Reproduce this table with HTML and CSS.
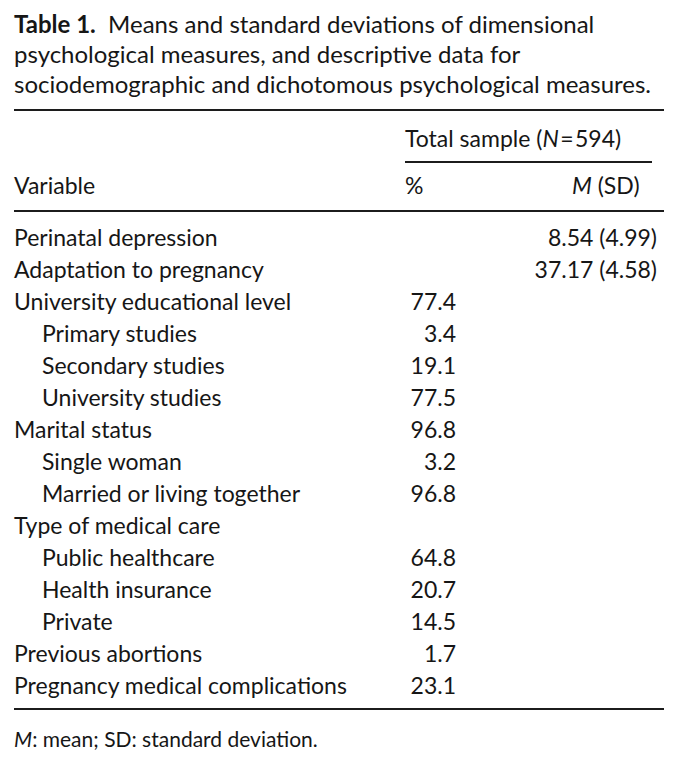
FILE: index.html
```html
<!DOCTYPE html>
<html>
<head>
<meta charset="utf-8">
<link rel="stylesheet" href="styles.css">
</head>
<body>
<div class="page">
  <p class="caption"><span class="label">Table 1.</span>&nbsp; Means and standard deviations of dimensional<br>psychological measures, and descriptive data for<br>sociodemographic and dichotomous psychological measures.</p>
  <table class="data">
    <colgroup>
      <col class="c-var">
      <col class="c-pct">
      <col class="c-msd">
    </colgroup>
    <thead>
      <tr class="group">
        <th class="var"></th>
        <th class="span" colspan="2"><span class="spanline">Total sample (<i>N</i>&#8202;=&#8202;594)</span></th>
      </tr>
      <tr class="heads">
        <th class="var">Variable</th>
        <th class="pct">%</th>
        <th class="msd"><i>M</i> (SD)</th>
      </tr>
    </thead>
    <tbody>
      <tr><td class="var">Perinatal depression</td><td class="pct"></td><td class="msd">8.54 (4.99)</td></tr>
      <tr><td class="var">Adaptation to pregnancy</td><td class="pct"></td><td class="msd">37.17 (4.58)</td></tr>
      <tr><td class="var">University educational level</td><td class="pct">77.4</td><td class="msd"></td></tr>
      <tr><td class="var sub">Primary studies</td><td class="pct">3.4</td><td class="msd"></td></tr>
      <tr><td class="var sub">Secondary studies</td><td class="pct">19.1</td><td class="msd"></td></tr>
      <tr><td class="var sub">University studies</td><td class="pct">77.5</td><td class="msd"></td></tr>
      <tr><td class="var">Marital status</td><td class="pct">96.8</td><td class="msd"></td></tr>
      <tr><td class="var sub">Single woman</td><td class="pct">3.2</td><td class="msd"></td></tr>
      <tr><td class="var sub">Married or living together</td><td class="pct">96.8</td><td class="msd"></td></tr>
      <tr><td class="var">Type of medical care</td><td class="pct"></td><td class="msd"></td></tr>
      <tr><td class="var sub">Public healthcare</td><td class="pct">64.8</td><td class="msd"></td></tr>
      <tr><td class="var sub">Health insurance</td><td class="pct">20.7</td><td class="msd"></td></tr>
      <tr><td class="var sub">Private</td><td class="pct">14.5</td><td class="msd"></td></tr>
      <tr><td class="var">Previous abortions</td><td class="pct">1.7</td><td class="msd"></td></tr>
      <tr><td class="var">Pregnancy medical complications</td><td class="pct">23.1</td><td class="msd"></td></tr>
    </tbody>
  </table>
  <p class="note"><i>M</i>: mean; SD: standard deviation.</p>
</div>
</body>
</html>
```

FILE: styles.css
```css
html, body {
  margin: 0;
  padding: 0;
  background: #ffffff;
}

body {
  font-family: Lato, "Open Sans", sans-serif;
  color: #161616;
}

.page {
  padding: 9px 16px 0 14px;
}

.caption {
  margin: 0;
  font-size: 24px;
  line-height: 30px;
  white-space: nowrap;
}

.label {
  font-weight: 700;
}

.data {
  width: 650px;
  table-layout: fixed;
  border-collapse: collapse;
  margin-top: 10px;
  border-top: 2px solid #1c1c1c;
  border-bottom: 2px solid #1c1c1c;
  font-size: 23px;
}

.c-var { width: 391px; }
.c-pct { width: 51px; }
.c-msd { width: 208px; }

.data th {
  font-weight: 400;
  text-align: left;
  padding: 0;
  line-height: 28px;
  white-space: nowrap;
}

.data td {
  padding: 0;
  height: 32px;
  line-height: 32px;
  white-space: nowrap;
}

.group th {
  padding-top: 13px;
}

.spanline {
  display: block;
  width: 247px;
  border-bottom: 2px solid #1c1c1c;
  padding-bottom: 9px;
}

.heads th {
  padding-top: 8px;
  padding-bottom: 11px;
  border-bottom: 2px solid #1c1c1c;
}

.data .heads .msd {
  text-align: left;
  padding-left: 116px;
}

.data .sub {
  padding-left: 28px;
}

.data .pct {
  text-align: right;
}

.data .heads .pct {
  text-align: left;
}

.data .msd {
  text-align: right;
  padding-right: 7px;
}

.data tbody tr:first-child td {
  padding-top: 9px;
}

.data tbody tr:last-child td {
  padding-bottom: 7px;
}

.note {
  margin: 15px 0 0 0;
  font-size: 21px;
  line-height: 28px;
}
```
